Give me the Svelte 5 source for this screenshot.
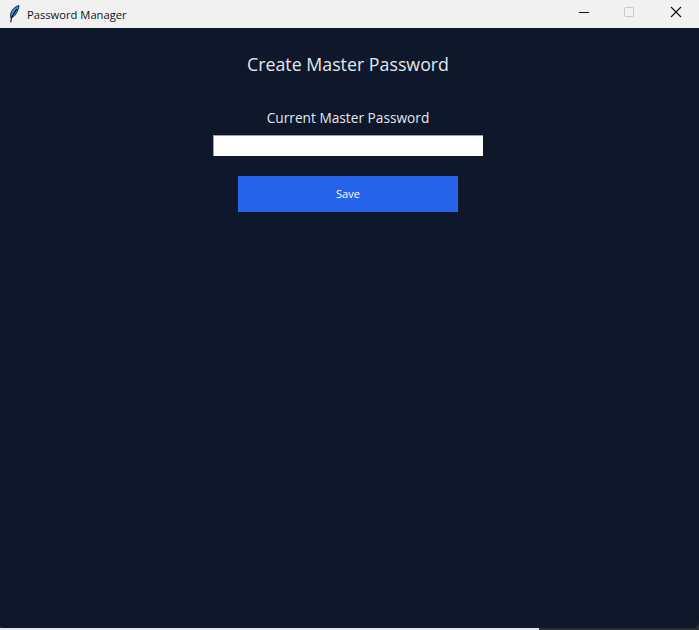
<script>
  let password = $state('');
</script>

<div class="page">
  <div class="window">
    <header class="titlebar">
      <div class="title">
        <svg class="feather" width="12" height="18" viewBox="0 0 12 18" aria-hidden="true">
          <path d="M11 0.6C7 1.4 3.2 5 2.6 9.6C2.4 11 2.6 12.2 3.2 13C7 11.6 10 7 11 0.6Z" fill="#3a8de0" stroke="#0b1a30" stroke-width="0.9"/>
          <path d="M8.8 4L3.4 12.8L2.8 17.2" fill="none" stroke="#0a0a0a" stroke-width="1.1"/>
        </svg>
        <span>Password Manager</span>
      </div>
      <div class="controls">
        <span class="ctl"><svg width="12" height="12" viewBox="0 0 12 12"><path d="M1 6.5H11" stroke="#111" stroke-width="1"/></svg></span>
        <span class="ctl"><svg width="12" height="12" viewBox="0 0 12 12"><rect x="0.5" y="1.5" width="9" height="9" rx="1" fill="none" stroke="#c8c8c8"/></svg></span>
        <span class="ctl"><svg width="12" height="12" viewBox="0 0 12 12"><path d="M1 1L11 11M11 1L1 11" stroke="#111" stroke-width="1.1"/></svg></span>
      </div>
    </header>
    <main class="content">
      <h1>Create Master Password</h1>
      <label for="pw">Current Master Password</label>
      <input id="pw" type="password" bind:value={password} />
      <button type="button">Save</button>
    </main>
  </div>
  <div class="edge">
    <span class="edge-light"></span>
    <span class="edge-dark"></span>
  </div>
</div>

<style>
  :global(body) {
    margin: 0;
    background: #2e2e2e;
  }
  .page {
    width: 699px;
    height: 630px;
    display: flex;
    flex-direction: column;
    background: #2e2e2e;
  }
  .window {
    height: 628px;
    flex: none;
    display: flex;
    flex-direction: column;
    overflow: hidden;
    border-radius: 0 0 6px 4px;
    font-family: "Open Sans", "Noto Sans", sans-serif;
  }
  .edge {
    flex: 1;
    display: flex;
  }
  .edge-light {
    width: 539px;
    background: #e8e8e8;
  }
  .edge-dark {
    flex: 1;
    background: #2e2e2e;
  }
  .titlebar {
    height: 28px;
    flex: none;
    background: #f1f1f1;
    display: flex;
    justify-content: space-between;
    align-items: center;
  }
  .title {
    display: flex;
    align-items: center;
    gap: 7px;
    padding-left: 8px;
    font-size: 11.2px;
    color: #111;
  }
  .feather {
    display: block;
  }
  .controls {
    display: flex;
  }
  .ctl {
    width: 46px;
    height: 24px;
    padding-bottom: 4px;
    display: flex;
    align-items: center;
    justify-content: center;
  }
  .content {
    flex: 1;
    background: #0f172a;
    display: flex;
    flex-direction: column;
    align-items: center;
    padding-top: 24px;
    padding-right: 3px;
  }
  h1 {
    margin: 0;
    font-size: 17.8px;
    line-height: 24px;
    font-weight: 400;
    color: #e2e8f0;
  }
  label {
    margin-top: 32px;
    font-size: 13.7px;
    line-height: 20px;
    color: #e2e8f0;
  }
  input {
    margin-top: 7px;
    width: 270px;
    height: 21px;
    box-sizing: border-box;
    border: none;
    border-top: 1px solid #a0a0a0;
    border-left: 1px solid #a0a0a0;
    background: #fff;
    padding: 0;
    outline: none;
  }
  button {
    margin-top: 20px;
    width: 220px;
    height: 36px;
    border: none;
    background: #2563eb;
    color: #fff;
    font: inherit;
    font-size: 11px;
    padding: 0 0 2px;
  }
</style>
